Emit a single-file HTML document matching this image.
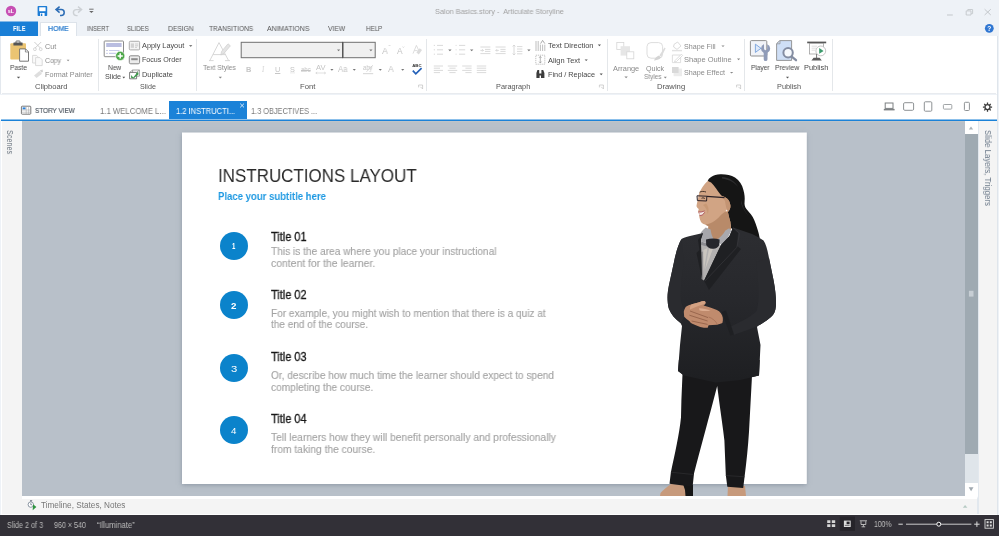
<!DOCTYPE html>
<html lang="en">
<head>
<meta charset="utf-8">
<title>Salon Basics.story - Articulate Storyline</title>
<style>
*{box-sizing:border-box;margin:0;padding:0}
html,body{width:999px;height:536px;overflow:hidden;background:#eef2f7}
body{position:relative;font-family:"Liberation Sans",sans-serif;font-size:8px;color:#444}
#app{position:absolute;left:0;top:0;width:999px;height:536px;overflow:hidden}
#app>div,#app>svg{position:absolute}
.x{white-space:pre;line-height:1;transform-origin:0 0;will-change:transform}
#titlebar{left:0;top:0;width:999px;height:36px;background:#eef2f7}
#filetab{left:0;top:22px;width:38px;height:14px;background:#1a7fd6;box-shadow:0 -.5px 0 #1a7fd6}
#hometab{left:40px;top:22px;width:37px;height:15px;background:#fff;border:1px solid #dde3ea;border-bottom:none}
#ribbon{left:0;top:36px;width:999px;height:58px;background:#fff;border-left:1px solid #e3e8ee}
#ribbonline{left:2px;top:93px;width:994px;height:1px;background:#e8ebef}
.gl{top:39px;width:1px;height:52px;background:#e4e7ea}
#doctabs{left:0;top:95px;width:999px;height:25px;background:#fff}
#acttab{left:168.5px;top:100.8px;width:78px;height:19.4px;background:#1b82d8}
#blueline{left:1px;top:119px;width:997px;height:2px;background:linear-gradient(#8cc0eb 50%,#1b82d8 50%)}
#ws{left:0;top:121px;width:999px;height:375px;background:#b8c0c9}
#leftp{left:0;top:121px;width:21.5px;height:394px;background:#f4f4f4;border-left:1px solid #eef2f7;box-shadow:inset 1px 0 0 #fff}
#rightp{left:978px;top:121px;width:21px;height:394px;background:#f4f4f4;border-left:1px solid #e2e8ee}
#vscroll{left:964.5px;top:121px;width:13.5px;height:375px;background:#9faab2}
#vs-top{left:964.5px;top:121px;width:13.5px;height:13px;background:#fff}
#vs-track{left:964.5px;top:454px;width:13.5px;height:29px;background:#dfe5ea}
#vs-bot{left:964.5px;top:483px;width:13.5px;height:12.5px;background:#fff}
#slide{left:182px;top:133px;width:624px;height:351px;background:#fff;box-shadow:0 .5px 4.5px rgba(105,118,135,.55)}
#tlbar{left:22px;top:495.5px;width:956px;height:19.5px;background:#f4f4f4;border-top:3px solid #fff;border-right:1px solid #e2e8ee}
#redge{left:997px;top:36px;width:2px;height:479px;background:#eef2f7;border-left:1px solid #dfe5eb}
#wline{left:1px;top:514px;width:996px;height:1px;background:#fdfdfd}
#status{left:0;top:515px;width:999px;height:21px;background:#323037}
.vt{font-size:8.1px;line-height:1;white-space:pre;transform-origin:0 0;transform:rotate(90deg)}
.circ{width:28px;height:28px;border-radius:50%;background:#0b83cb}
</style>
</head>
<body>
<div id="app">
<div id="titlebar"></div>
<div id="filetab"></div>
<div id="hometab"></div>
<div id="ribbon"></div>
<div id="ribbonline"></div>
<div class="gl" style="left:97.5px"></div>
<div class="gl" style="left:196px"></div>
<div class="gl" style="left:426px"></div>
<div class="gl" style="left:606.5px"></div>
<div class="gl" style="left:743.5px"></div>
<div class="gl" style="left:832px"></div>
<div id="doctabs"></div>
<div id="acttab"></div>
<div id="blueline"></div>
<div id="ws"></div>
<div id="leftp"></div>
<div id="vscroll"></div>
<div id="vs-top"></div>
<div id="vs-track"></div>
<div id="vs-bot"></div>
<div id="rightp"></div>
<div id="slide"></div>
<svg style="left:0;top:0" width="999" height="496" viewBox="0 0 999 496"><rect x="182" y="132.5" width="624.8" height="351.4" fill="#fff"/><rect x="22" y="121" width="942.5" height="1.2" fill="#c2c6c9" opacity=".7"/></svg>
<div class="circ" style="left:219.8px;top:231.5px"></div>
<div class="circ" style="left:219.8px;top:291.2px"></div>
<div class="circ" style="left:219.8px;top:354.3px"></div>
<div class="circ" style="left:219.8px;top:416.3px"></div>
<svg id="womansvg" style="left:0;top:0" width="999" height="496" viewBox="0 0 999 496">
<g id="woman">
<defs><linearGradient id="jk" gradientUnits="userSpaceOnUse" x1="0" y1="236" x2="0" y2="380"><stop offset="0" stop-color="#2c2d31"/><stop offset=".45" stop-color="#27282c"/><stop offset="1" stop-color="#1e1f22"/></linearGradient></defs>
<!-- feet / shoes (below trousers) -->
<path d="M671 484 C667 487 663 490 660.5 493 L660 496 L692 496 L692 485 Z" fill="#c79a7c"/>
<path d="M683 484 L693 485 L693 496 L685.5 496 L685 490 Z" fill="#161616"/>
<path d="M728 485 L745 486 L746 496 L727.5 496 Z" fill="#c79a7c"/>
<!-- hair -->
<path d="M707.7 181 C708.5 178 713 174.6 720.3 174.2 C725.5 174 731 175 735 177.5 C739.5 180.5 742.3 185 743.4 190 C744.6 194 745 198 744.6 201.5 C744.3 204 744.6 206.5 746.4 209 C749.5 212.5 752.6 216 754.2 220 C756 224.5 757.6 229 758.6 233 L759.8 238.5 L748 240 L737 233 L731 228 L727 211 L716 190 Z" fill="#151515"/>
<path d="M722 177 C729 177.5 735 181 738.5 187.5 C735 183 729 179.5 722 178.6 Z" fill="#2e2e30"/>
<path d="M741 200 C742 206 745 211 748.5 216 C745.4 212.6 742.4 208 741 203 Z" fill="#2c2c2e"/>
<!-- neck + face -->
<path d="M707.7 181 C705.5 183 703.8 185 702.7 186.8 C701 189.5 699.5 192 698.8 194.4 C698.4 196 698.2 197.3 698.1 198.6 C697.6 201 696.8 204 696.5 206.1 C696.7 207.5 697.8 208.5 698.8 209 C698.4 210 698.1 211 698.1 212 C698.5 213 699 213.8 699.3 214.5 C699.2 215.5 699.2 216.2 699.3 217 C699.8 219 700.3 220.8 701 222.1 C702.2 223.6 703.8 224.3 705.2 224.6 C706.3 225.2 707.5 225.8 708.5 226.3 C708.3 228 708 230 707.7 232.5 L712 240 L724 238 L731 229 L730.4 222.1 C729.5 219 728.6 215.5 727.9 212 C729.5 210.5 730.8 208 730.4 205.3 C730 202.5 728.8 200 727 198.6 C725.5 197.5 723.8 196.6 722 196.1 C720 194 717.8 191 716.1 188.5 C714.5 186.3 712.8 184.3 711.1 182.6 Z" fill="#d1a484"/>
<path d="M705.2 224.6 C710 224 716 221 720 216 C723 213 725 211 727.9 212 C728.6 215.5 729.5 219 730.4 222.1 L731 229 L724 238 L712 240 L707.7 232.5 L708.5 226.3 Z" fill="#b88a69"/>
<path d="M722 196.1 C723.8 196.6 725.5 197.5 727 198.6 C728.8 200 730 202.5 730.4 205.3 C730.8 208 729.5 210.5 727.9 212 C726.5 209 725.5 205 725 201 Z" fill="#c39473"/>
<!-- glasses -->
<path d="M697 195.8 L706.8 196.2 L706.6 201 L697.4 200.6 Z" fill="none" stroke="#2b2126" stroke-width="1"/>
<path d="M706.8 196.4 L724.5 197.6" stroke="#2b2126" stroke-width="1.3" fill="none"/>
<path d="M698.8 213 L701.8 213.6" stroke="#a8455a" stroke-width="1" fill="none"/>
<path d="M699.6 192.2 C701.5 191.2 704 191.2 706 192" stroke="#3a2a22" stroke-width=".9" fill="none"/>
<path d="M701.6 198.3 C702.6 197.7 703.8 197.8 704.8 198.5" stroke="#2a1c18" stroke-width=".9" fill="none"/>
<path d="M699 212 C700.6 212.6 702.6 212.4 704.4 211.2 C704 213.6 702.2 215.4 699.8 215.2 Z" fill="#f3e9e4"/>
<path d="M698.4 211.8 C700.4 212.3 702.6 211.9 704.6 210.8" stroke="#a8455a" stroke-width=".8" fill="none"/>
<path d="M699.6 215.4 C701.6 215.8 703.4 214.6 704.6 212.4" stroke="#a8455a" stroke-width=".8" fill="none"/>
<path d="M703 205 C705.5 207 707.5 210 707.5 214 C709.5 210.5 708.5 206 706 203.5 Z" fill="#c4946f" opacity=".7"/>
<circle cx="726.6" cy="210.6" r=".8" fill="#f2f2f2"/>
<!-- scarf + shirt -->
<path d="M701.4 243 L721.6 245.5 L704.2 280.6 L701.4 279.2 Z" fill="#b3b1b1"/>
<path d="M703.4 250 L707.5 248 L703.6 272 Z M709 249 L713 248.6 L705 270 Z" fill="#d2ccc4" opacity=".75"/>
<path d="M701.6 252 L703 251.6 L703.2 279.8 L701.4 279.2 Z" fill="#8c8a8c"/>
<path d="M700.8 232.6 C702.4 230.6 704 229 705.7 227.6 L710.6 229.4 C711 232.6 712 236 713.6 239 L717 239.4 L709 244 L701.2 241.6 Z" fill="#a6a6ab"/>
<path d="M729.2 228.2 L731.2 231 C729 236 725.6 241.4 722 245.6 L716.6 240.2 C720 237.4 723.4 234 725.4 230.4 Z" fill="#a9a9ae"/>
<path d="M701.2 241.6 L709 244 L707 246.6 L701.4 245 Z" fill="#8b8b91"/>
<path d="M706 239.6 C710 238.4 715 238.2 719.6 239.4 L719.4 245 C718 247.6 715.6 249 713 248.8 C710 249 707.6 247.6 706.2 245 Z" fill="#25262c"/>
<!-- jacket -->
<path d="M703 233 L690 236 C686 237 683 238 681.5 239 C678.5 244 676 252 674 262 L669 285 C668 290 667.3 295 667.6 300 C667.8 304 668.2 307 669 309 C671 314 675 319 680.5 323 L682 326 L680 345 L678 371 L684 375.5 L700 379 L715.7 382.6 L740 380 L759 375.5 L760.5 345 L757 327 L758 325.8 C762 323.5 767 320.5 771 317 C774 314.5 775.5 311 775.9 306 C776.3 300 775.5 290 773.5 280 L769 258 C767.5 250 766 244 763.5 240.5 C760 238 756 236 752 234 L733 227.5 L729.5 236 L721 245 L704.1 280.4 L701.6 279 L701 239 Z" fill="url(#jk)"/>
<!-- lapel shading -->
<path d="M733 227.5 L738 233 L737 246 L741 249 L709 290 L704.1 280.4 L721 245 L729.5 236 Z" fill="#1f2023"/>
<path d="M703 233 L698 240 L699.5 250 L696.5 253 L702 279 L701 239 Z" fill="#1f2023"/>
<path d="M733 227.8 L739.6 233.2 L736.8 247.4 L705 281" stroke="#3a3b40" stroke-width=".6" fill="none"/>
<!-- arm shading -->
<path d="M756 262 C758 280 760 295 757 310 C753 316 740 322 730 327 L730.6 336 C740 333 750 329.5 758 325.8 C762 323.5 767 320.5 771 317 C774 314.5 775.5 311 775.9 306 C776.3 300 775.5 290 773.5 280 L769 258 Z" fill="#2a2b2f"/>
<path d="M721.8 312 L730.6 336 L734 334.5 L726 310.5 Z" fill="#1f2023"/>
<path d="M684 262 C682 275 680 290 681 300 C682 306 684 310 687 313 L680.5 323 C675 319 671 314 669 309 C668.2 307 667.8 304 667.6 300 C667.3 295 668 290 669 285 L674 262 C676 252 678.5 244 681.5 239 Z" fill="#2a2b2f"/>
<!-- hands -->
<path d="M683.8 311.8 C684.2 309.6 685 308 685.9 306.8 C687.6 305.6 689.6 304.9 691.8 304.3 L699.3 302.2 C701 301.6 702.8 301.2 704.4 301.1 C705.4 301.6 705.8 302.5 705.4 303.4 C705 304.3 704.4 305 703.5 305.5 C705.8 306.2 708 306.9 710.2 307.6 C712.6 308.3 714.8 309.1 716.9 310.1 C718.6 310.9 719.8 311.9 720.7 313.1 C721.8 314.5 722.5 316 722.8 317.7 C723 319.6 722.9 321.4 722.4 323.1 C720.6 324 718.8 324.5 716.9 324.8 C714 325.1 711.2 325.2 708.6 325.2 L707.7 327.8 C705 327.8 702.6 327.5 700.2 326.9 C697.2 326 694.4 324.9 691.8 323.6 C690.8 322.9 690 322 689.3 321 C687.4 319.8 685.6 318.4 684.2 316.8 Z" fill="#c08b6d"/>
<path d="M691.8 304.3 L699.3 302.2 C701 301.6 702.8 301.2 704.4 301.1 C705.4 301.6 705.8 302.5 705.4 303.4 L697 306.6 L690 309.6 C689.6 307.4 690.4 305.6 691.8 304.3 Z" fill="#d4a283"/>
<path d="M699 308.2 C703 308.4 707.4 309.4 710.6 310.6 C707.4 311.4 703 311.2 699.6 310.4 Z" fill="#dcac8f"/>
<path d="M690 311 L708 317.6 M689.4 315.2 L707.6 321 M691.6 321 L707.6 324.4" stroke="#8f5d45" stroke-width=".8" fill="none"/>
<path d="M708.6 317 C712 318 716 321 717.4 324.6" stroke="#a06c52" stroke-width=".7" fill="none"/>
<!-- trousers -->
<path d="M682.5 374 L681.4 400 L681 417.3 C679.4 434 674.6 455 670.9 472.2 L669.5 483.8 L692.6 486.7 L694 473.6 C700 450 707 425 712.8 402.8 L717.2 386 L719 400 C721 415 723 428 724.4 440.4 L725.8 475 L727.3 486.7 L743.2 488.1 L744.6 476.5 C746.5 462 748 447 749 431.7 L751.8 379.7 L752 372 Z" fill="#18181a"/>
<path d="M670.9 472.2 L694 474.6" stroke="#2c2c2e" stroke-width=".8" fill="none"/>
<path d="M725.8 475.5 L744.6 476.8" stroke="#2c2c2e" stroke-width=".8" fill="none"/>
<!-- jacket hem over trousers -->
<path d="M678.85 360 L678 371 L684 375.5 L700 379 L715.7 382.6 L740 380 L759 375.5 L759.76 360 Z" fill="url(#jk)"/>
</g>

</svg>
<div id="tlbar"></div>
<div id="redge"></div>
<div id="wline"></div>
<div id="status"></div>
<div class="x" style="left:434.80px;top:8.00px;font-size:7.41px;color:#a2a2a2;transform:scaleX(0.9841)">Salon Basics.story -  Articulate Storyline</div>
<div class="x" style="left:12.60px;top:26.00px;font-size:7.12px;color:#fff;transform:scaleX(0.8110);font-weight:700">FILE</div>
<div class="x" style="left:47.75px;top:26.00px;font-size:7.12px;color:#2277cc;transform:scaleX(0.9728);-webkit-text-stroke:.2px #2277cc">HOME</div>
<div class="x" style="left:86.60px;top:26.00px;font-size:7.12px;color:#565656;transform:scaleX(0.8572)">INSERT</div>
<div class="x" style="left:126.70px;top:26.00px;font-size:7.12px;color:#565656;transform:scaleX(0.8612)">SLIDES</div>
<div class="x" style="left:167.60px;top:26.00px;font-size:7.12px;color:#565656;transform:scaleX(0.9402)">DESIGN</div>
<div class="x" style="left:208.70px;top:26.00px;font-size:7.12px;color:#565656;transform:scaleX(0.9240)">TRANSITIONS</div>
<div class="x" style="left:267.30px;top:26.00px;font-size:7.12px;color:#565656;transform:scaleX(0.9689)">ANIMATIONS</div>
<div class="x" style="left:327.90px;top:26.00px;font-size:7.12px;color:#565656;transform:scaleX(0.9480)">VIEW</div>
<div class="x" style="left:365.70px;top:26.00px;font-size:7.12px;color:#565656;transform:scaleX(0.8763)">HELP</div>
<div class="x" style="left:9.50px;top:65.00px;font-size:7.12px;color:#484848;transform:scaleX(0.9382)">Paste</div>
<div class="x" style="left:45.10px;top:44.00px;font-size:7.12px;color:#8a8a8a;transform:scaleX(1.0101)">Cut</div>
<div class="x" style="left:45.10px;top:58.00px;font-size:7.12px;color:#8a8a8a;transform:scaleX(0.9623)">Copy</div>
<div class="x" style="left:45.10px;top:72.00px;font-size:7.12px;color:#8a8a8a;transform:scaleX(1.0137)">Format Painter</div>
<div class="x" style="left:34.90px;top:84.00px;font-size:7.12px;color:#555;transform:scaleX(1.0697)">Clipboard</div>
<div class="x" style="left:107.90px;top:65.00px;font-size:7.12px;color:#484848;transform:scaleX(0.9279)">New</div>
<div class="x" style="left:105.10px;top:74.00px;font-size:7.12px;color:#484848;transform:scaleX(1.0218)">Slide</div>
<div class="x" style="left:142.20px;top:43.00px;font-size:7.12px;color:#484848;transform:scaleX(1.0285)">Apply Layout</div>
<div class="x" style="left:142.20px;top:57.00px;font-size:7.12px;color:#484848;transform:scaleX(0.9990)">Focus Order</div>
<div class="x" style="left:142.20px;top:72.00px;font-size:7.12px;color:#484848;transform:scaleX(1.0409)">Duplicate</div>
<div class="x" style="left:140.10px;top:84.00px;font-size:7.12px;color:#555;transform:scaleX(1.0029)">Slide</div>
<div class="x" style="left:203.10px;top:65.00px;font-size:7.12px;color:#8a8a8a;transform:scaleX(0.9564)">Text Styles</div>
<div class="x" style="left:245.90px;top:66.00px;font-size:7.27px;color:#c6c6c6;transform:scaleX(1.0200);font-weight:700">B</div>
<div class="x" style="left:262.35px;top:66.00px;font-size:7.63px;color:#c6c6c6;transform:scaleX(0.7500);font-family:'Liberation Serif',serif;font-style:italic">I</div>
<div class="x" style="left:274.70px;top:66.00px;font-size:7.27px;color:#c6c6c6;transform:scaleX(1.0200);text-decoration:underline">U</div>
<div class="x" style="left:289.60px;top:66.00px;font-size:7.27px;color:#c4c4c4;transform:scaleX(1.0000)">S</div>
<div class="x" style="left:301.30px;top:67.00px;font-size:6.69px;color:#c6c6c6;transform:scaleX(0.8917);text-decoration:line-through">abc</div>
<div class="x" style="left:315.70px;top:65.00px;font-size:6.69px;color:#c4c4c4;transform:scaleX(1.1267)">AV</div>
<div class="x" style="left:337.70px;top:66.00px;font-size:8.14px;color:#c4c4c4;transform:scaleX(0.9406)">Aa</div>
<div class="x" style="left:363.00px;top:65.00px;font-size:6.4px;color:#c4c4c4;transform:scaleX(0.9182)">aby</div>
<div class="x" style="left:387.80px;top:64.00px;font-size:9.45px;color:#c4c4c4;transform:scaleX(0.9143)">A</div>
<div class="x" style="left:381.90px;top:46.00px;font-size:9.59px;color:#c4c4c4;transform:scaleX(0.9143)">A</div>
<div class="x" style="left:396.60px;top:47.00px;font-size:8.43px;color:#c4c4c4;transform:scaleX(0.9333)">A</div>
<div class="x" style="left:299.90px;top:84.00px;font-size:7.12px;color:#555;transform:scaleX(1.0807)">Font</div>
<div class="x" style="left:547.70px;top:43.00px;font-size:7.12px;color:#484848;transform:scaleX(1.0577)">Text Direction</div>
<div class="x" style="left:547.70px;top:58.00px;font-size:7.12px;color:#484848;transform:scaleX(1.0471)">Align Text</div>
<div class="x" style="left:547.70px;top:72.00px;font-size:7.12px;color:#484848;transform:scaleX(1.0265)">Find / Replace</div>
<div class="x" style="left:495.70px;top:84.00px;font-size:7.12px;color:#555;transform:scaleX(1.0317)">Paragraph</div>
<div class="x" style="left:612.80px;top:66.00px;font-size:7.12px;color:#8a8a8a;transform:scaleX(1.0340)">Arrange</div>
<div class="x" style="left:646.20px;top:66.00px;font-size:7.12px;color:#8a8a8a;transform:scaleX(0.9883)">Quick</div>
<div class="x" style="left:644.30px;top:74.00px;font-size:7.12px;color:#8a8a8a;transform:scaleX(0.9089)">Styles</div>
<div class="x" style="left:683.80px;top:44.00px;font-size:7.12px;color:#8a8a8a;transform:scaleX(1.0020)">Shape Fill</div>
<div class="x" style="left:683.80px;top:57.00px;font-size:7.12px;color:#8a8a8a;transform:scaleX(1.0553)">Shape Outline</div>
<div class="x" style="left:683.80px;top:70.00px;font-size:7.12px;color:#8a8a8a;transform:scaleX(1.0122)">Shape Effect</div>
<div class="x" style="left:657.10px;top:84.00px;font-size:7.12px;color:#555;transform:scaleX(1.0795)">Drawing</div>
<div class="x" style="left:750.90px;top:65.00px;font-size:7.12px;color:#484848;transform:scaleX(0.9190)">Player</div>
<div class="x" style="left:774.90px;top:65.00px;font-size:7.12px;color:#484848;transform:scaleX(0.9560)">Preview</div>
<div class="x" style="left:804.10px;top:65.00px;font-size:7.12px;color:#484848;transform:scaleX(1.0401)">Publish</div>
<div class="x" style="left:776.90px;top:84.00px;font-size:7.12px;color:#555;transform:scaleX(1.0315)">Publish</div>
<div class="x" style="left:35.30px;top:107.00px;font-size:7.7px;color:#505963;transform:scaleX(0.8332);-webkit-text-stroke:.2px #505963">STORY VIEW</div>
<div class="x" style="left:99.90px;top:108.00px;font-size:8.28px;color:#7a7a7a;transform:scaleX(0.9374)">1.1 WELCOME L...</div>
<div class="x" style="left:175.70px;top:108.00px;font-size:8.14px;color:#fff;transform:scaleX(0.9275)">1.2 INSTRUCTI...</div>
<div class="x" style="left:251.00px;top:108.00px;font-size:8.28px;color:#7a7a7a;transform:scaleX(0.8891)">1.3 OBJECTIVES ...</div>
<div class="x" style="left:41.30px;top:502.00px;font-size:8.14px;color:#777;transform:scaleX(1.0092)">Timeline, States, Notes</div>
<div class="x" style="left:6.70px;top:522.00px;font-size:8.14px;color:#bbbbbb;transform:scaleX(0.8873)">Slide 2 of 3</div>
<div class="x" style="left:54.10px;top:522.00px;font-size:8.14px;color:#bbbbbb;transform:scaleX(0.8792)">960 × 540</div>
<div class="x" style="left:97.40px;top:522.00px;font-size:8.14px;color:#bbbbbb;transform:scaleX(0.9363)">“Illuminate”</div>
<div class="x" style="left:873.80px;top:521.00px;font-size:8.14px;color:#bcbcbc;transform:scaleX(0.8416)">100%</div>
<div class="x" style="left:218.37px;top:167.00px;font-size:18.31px;color:#2a2a2a;transform:scaleX(0.9278)">INSTRUCTIONS LAYOUT</div>
<div class="x" style="left:218.30px;top:191.00px;font-size:11.19px;color:#1e99e2;transform:scaleX(0.8548);font-weight:700">Place your subtitle here</div>
<div class="x" style="left:270.90px;top:232.00px;font-size:11.92px;color:#181818;transform:scaleX(0.9210);-webkit-text-stroke:.32px #181818">Title 01</div>
<div class="x" style="left:270.90px;top:246.00px;font-size:10.9px;color:#a3a3a3;transform:scaleX(0.9313);-webkit-text-stroke:.12px #a3a3a3">This is the area where you place your instructional</div>
<div class="x" style="left:270.90px;top:258.00px;font-size:10.9px;color:#a3a3a3;transform:scaleX(0.9564);-webkit-text-stroke:.12px #a3a3a3">content for the learner.</div>
<div class="x" style="left:270.90px;top:290.00px;font-size:11.92px;color:#181818;transform:scaleX(0.9210);-webkit-text-stroke:.32px #181818">Title 02</div>
<div class="x" style="left:270.90px;top:308.00px;font-size:10.9px;color:#a3a3a3;transform:scaleX(0.9262);-webkit-text-stroke:.12px #a3a3a3">For example, you might wish to mention that there is a quiz at</div>
<div class="x" style="left:270.90px;top:319.00px;font-size:10.9px;color:#a3a3a3;transform:scaleX(0.9210);-webkit-text-stroke:.12px #a3a3a3">the end of the course.</div>
<div class="x" style="left:270.90px;top:352.00px;font-size:11.92px;color:#181818;transform:scaleX(0.9210);-webkit-text-stroke:.32px #181818">Title 03</div>
<div class="x" style="left:270.90px;top:370.00px;font-size:10.9px;color:#a3a3a3;transform:scaleX(0.9274);-webkit-text-stroke:.12px #a3a3a3">Or, describe how much time the learner should expect to spend</div>
<div class="x" style="left:270.90px;top:382.00px;font-size:10.9px;color:#a3a3a3;transform:scaleX(0.9329);-webkit-text-stroke:.12px #a3a3a3">completing the course.</div>
<div class="x" style="left:270.90px;top:414.00px;font-size:11.92px;color:#181818;transform:scaleX(0.9210);-webkit-text-stroke:.32px #181818">Title 04</div>
<div class="x" style="left:270.90px;top:432.00px;font-size:10.9px;color:#a3a3a3;transform:scaleX(0.9412);-webkit-text-stroke:.12px #a3a3a3">Tell learners how they will benefit personally and professionally</div>
<div class="x" style="left:270.90px;top:444.00px;font-size:10.9px;color:#a3a3a3;transform:scaleX(0.9409);-webkit-text-stroke:.12px #a3a3a3">from taking the course.</div>
<div class="x" style="left:231.70px;top:241.00px;font-size:9.74px;color:#fff;transform:scaleX(0.6167);font-weight:700">1</div>
<div class="x" style="left:230.70px;top:301.00px;font-size:9.74px;color:#fff;transform:scaleX(0.9167);font-weight:700">2</div>
<div class="x" style="left:230.70px;top:364.00px;font-size:9.74px;color:#fff;transform:scaleX(1.1600)">3</div>
<div class="x" style="left:230.60px;top:426.00px;font-size:9.74px;color:#fff;transform:scaleX(1.0000)">4</div>
<div class="x" style="left:13.70px;top:130.20px;font-size:9.01px;color:#6c7680;transform:rotate(90deg) scaleX(0.8061)">Scenes</div>
<div class="x" style="left:992.40px;top:130.40px;font-size:9.01px;color:#6c7a8a;transform:rotate(90deg) scaleX(0.8734)">Slide Layers, Triggers</div>
<svg id="iconsvg" style="left:0;top:0" width="999" height="536" viewBox="0 0 999 536">
<g id="qat" fill="none">
<circle cx="11" cy="11" r="5.2" fill="#c750b4"/>
<text x="11" y="12.9" font-size="5.4" font-weight="700" fill="#fff" text-anchor="middle" font-family="Liberation Sans, sans-serif">sL</text>
<rect x="37.6" y="6" width="9.6" height="10" rx=".8" fill="#1c7cd5"/>
<rect x="39.2" y="7.3" width="6.4" height="3.9" fill="#fff"/>
<rect x="40" y="13" width="4.6" height="3" fill="#fff"/>
<rect x="40.8" y="13.6" width="1.5" height="2.4" fill="#1c7cd5"/>
<path d="M59.6 6.6 L56 9.6 L59.6 12.6 M56.4 9.6 H61.2 A3 3 0 0 1 61.2 15.6 H60" stroke="#2b6cb5" stroke-width="1.5"/>
<path d="M78 6.6 L81.6 9.6 L78 12.6 M81.2 9.6 H76.4 A3 3 0 0 0 76.4 15.6 H77.6" stroke="#cdd1d5" stroke-width="1.4"/>
<path d="M89.2 9.2 H93.6" stroke="#666" stroke-width=".9"/>
<path d="M89.2 10.9 H93.6 L91.4 13.1 Z" fill="#666"/>
<path d="M947 15 H952.8" stroke="#c3c7cb" stroke-width="1"/>
<path d="M967.8 10.8 V9.5 H972.6 V13.6 H971.2 M966.2 10.9 H971 V15 H966.2 Z" stroke="#c3c7cb" stroke-width=".9"/>
<path d="M984.6 9.2 L990.8 15 M990.8 9.2 L984.6 15" stroke="#c3c7cb" stroke-width="1"/>
<circle cx="989.3" cy="28.3" r="4.4" fill="#2f76d2"/>
<text x="989.3" y="30.6" font-size="6.6" font-weight="700" fill="#fff" text-anchor="middle" font-family="Liberation Sans, sans-serif">?</text>
</g>
<g id="rib-clip" fill="none">
<rect x="10.3" y="43.3" width="15.7" height="16.2" rx=".9" fill="#ebc472"/>
<rect x="16" y="41" width="4" height="2.6" rx=".6" stroke="#555" stroke-width=".9"/>
<rect x="13.4" y="42.6" width="9.2" height="3" rx=".5" fill="#555"/>
<path d="M19.6 48.9 H25.6 L28.5 51.8 V61.2 H19.6 Z" fill="#fff" stroke="#6a6a6a" stroke-width=".9"/>
<path d="M25.4 49 V52 H28.4" stroke="#6a6a6a" stroke-width=".7"/>
<path d="M16.8 76.8 H20.2 L18.5 78.6 Z" fill="#555"/>
<path d="M34.4 42 L40.4 48 M41.2 42 L35.2 48" stroke="#cbcbcb" stroke-width=".9"/>
<circle cx="34.9" cy="49.2" r="1.4" stroke="#cbcbcb" stroke-width=".8"/>
<circle cx="40.7" cy="49.2" r="1.4" stroke="#cbcbcb" stroke-width=".8"/>
<path d="M32.6 55.4 H36.6 L38.6 57.4 V63 H32.6 Z" fill="#fafafa" stroke="#d2d2d2" stroke-width=".8"/>
<path d="M35.6 57.6 H40 L42.2 59.8 V65.6 H35.6 Z" fill="#fafafa" stroke="#d2d2d2" stroke-width=".8"/>
<path d="M66.7 59.8 H69.5 L68.1 61.3 Z" fill="#888"/>
<path d="M34 75.5 L39.5 71 L42 73.8 L36.5 78 Z" fill="#dedede"/>
<path d="M39.8 70.6 L42.6 69.6 L43 72 L41.4 72.6 Z" fill="#d2d2d2"/>
</g>
<g id="rib-slide" fill="none">
<rect x="104.2" y="41" width="19.3" height="15.7" rx=".6" fill="#fff" stroke="#8a8a8a" stroke-width="1"/>
<rect x="106.2" y="43" width="15.4" height="4" fill="#b9bde0"/>
<path d="M106.4 50.5 h1.2 M106.4 53.4 h1.2" stroke="#aeb3dc" stroke-width="1"/>
<path d="M109 50.5 H119.5 M109 53.4 H116" stroke="#c9cdea" stroke-width="1.2"/>
<circle cx="120.2" cy="55.9" r="4.6" fill="#4ea84a" stroke="#fff" stroke-width=".6"/>
<path d="M117.6 55.9 H122.8 M120.2 53.3 V58.5" stroke="#fff" stroke-width="1.5"/>
<path d="M122.4 76.8 H125.2 L123.8 78.4 Z" fill="#555"/>
<rect x="129.3" y="41.3" width="10.3" height="8.6" rx="1" fill="#f4f4f4" stroke="#9a9a9a" stroke-width=".8"/>
<rect x="130.8" y="43.4" width="3.2" height="4.4" fill="#d2d2d2"/>
<path d="M135 44 H138.2 M135 45.8 H138.2 M135 47.4 H137" stroke="#bdbdbd" stroke-width=".7"/>
<path d="M189 45.2 H192.4 L190.7 46.8 Z" fill="#555"/>
<rect x="129.3" y="55.8" width="10.3" height="8" rx="1.4" fill="#ececec" stroke="#7e7e7e" stroke-width=".9"/>
<rect x="131.2" y="58.2" width="6.5" height="2" fill="#8c8c8c"/>
<path d="M132.6 70 H139.4 V76.2 H132.6 Z" fill="#fff" stroke="#8a8a8a" stroke-width=".8"/>
<path d="M129.6 72.4 L132.6 70 M139.4 70 L136.6 72.4" stroke="#8a8a8a" stroke-width=".7"/>
<path d="M129.6 72.4 H136.6 V78.8 H129.6 Z" fill="#fff" stroke="#6e6e6e" stroke-width=".9"/>
<path d="M131.2 75 L133.2 77.4 L138 71.6 L138.6 74.2 L133.6 78.4 L131 77.8 Z" fill="#3f9a4e"/>
</g>
<g id="rib-font" fill="none">
<path d="M209.8 60.6 L219 42.6 L228.6 60.6 M213 54.6 H225.6 M209 60.6 H213.6 M225 60.6 H230" stroke="#d2d2d2" stroke-width=".9"/>
<path d="M220.8 55 L221.6 51.4 L228 43.8 L230.4 45.8 L224 53.4 Z" fill="#e4e4e4" stroke="#cfcfcf" stroke-width=".7"/>
<path d="M218.7 76.8 H222 L220.3 78.5 Z" fill="#888"/>
<rect x="241.2" y="42.3" width="101.4" height="15.4" fill="#f0f0f0" stroke="#707070" stroke-width="1"/>
<rect x="342.8" y="42.3" width="32.4" height="15.4" fill="#f0f0f0" stroke="#707070" stroke-width="1"/>
<path d="M342.7 42 V58" stroke="#555" stroke-width="1.3"/>
<path d="M337 49.4 H340.2 L338.6 51.2 Z M369.3 49.4 H372.5 L370.9 51.2 Z" fill="#777"/>
<path d="M388.6 46 l.9 -1 l.9 1 M402.6 46.6 l.8 .9 l.8 -.9" stroke="#c9c9c9" stroke-width=".6"/>
<path d="M413 53.6 L416.4 45.4 L419 51 M414.4 50.6 H417.6" stroke="#d4d4d4" stroke-width=".8"/>
<path d="M416.4 52.6 L419.6 48.2 L422 50 L418.8 54.4 Z" fill="#dcdcdc"/>
<path d="M315.8 73 H325.6 M315.8 73 l1.4 -1 M315.8 73 l1.4 1 M325.6 73 l-1.4 -1 M325.6 73 l-1.4 1" stroke="#cfcfcf" stroke-width=".6"/>
<path d="M363 73.6 H373.2" stroke="#dcdcdc" stroke-width="1.2"/>
<path d="M366.5 71.8 L372.8 65.2" stroke="#cfcfcf" stroke-width=".8"/>
<path d="M330.3 69 H333.5 L331.9 70.7 Z M352.7 69 H355.9 L354.3 70.7 Z M378.7 69 H381.9 L380.3 70.7 Z M401.1 69 H404.3 L402.7 70.7 Z" fill="#777"/>
<path d="M290 72.9 H295" stroke="#dadada" stroke-width=".6"/>
<text x="416.9" y="67.4" font-size="3.9" font-weight="700" fill="#333" text-anchor="middle" font-family="Liberation Sans, sans-serif" textLength="9.4" lengthAdjust="spacingAndGlyphs">ABC</text>
<path d="M412.8 70.6 L415.8 73.8 L421.6 68.2" stroke="#2461b8" stroke-width="1.7"/>
<path d="M418.6 85 H422.6 V89 M420.4 86.8 L422.4 88.8 M418.6 85 V87.4" stroke="#b5b5b5" stroke-width=".6"/>
</g>
<g id="rib-para" fill="none" stroke="#d0d0d0" stroke-width=".8">
<path d="M433.8 45.4 h1.2 M433.8 49.8 h1.2 M433.8 54.2 h1.2 M437 45.4 H443 M437 49.8 H443 M437 54.2 H443"/>
<path d="M455.6 45.4 h1 M455.6 49.8 h1 M455.6 54.2 h1 M459 45.4 H465.2 M459 49.8 H465.2 M459 54.2 H465.2"/>
<path d="M480.4 47 H490.4 M485 49.4 H490.4 M485 51.4 H490.4 M480.4 53.6 H490.4 M480.4 50.4 h3 l-1.2 -1.2 m1.2 1.2 l-1.2 1.2"/>
<path d="M495.6 47 H505.6 M500.4 49.4 H505.6 M500.4 51.4 H505.6 M495.6 53.6 H505.6 M498.8 50.4 h-3 l1.2 -1.2 m-1.2 1.2 l1.2 1.2"/>
<path d="M514 45 V55 M514 45 l-1.3 1.5 M514 45 l1.3 1.5 M514 55 l-1.3 -1.5 M514 55 l1.3 -1.5 M517 46.6 H522.4 M517 49 H522.4 M517 51.4 H522.4 M517 53.8 H522.4"/>
<path d="M433.8 66 H443 M433.8 68.2 H440 M433.8 70.4 H443 M433.8 72.6 H440"/>
<path d="M447.8 66 H457.2 M449.4 68.2 H455.6 M447.8 70.4 H457.2 M449.4 72.6 H455.6"/>
<path d="M462.2 66 H471.6 M465.4 68.2 H471.6 M462.2 70.4 H471.6 M465.4 72.6 H471.6"/>
<path d="M476.8 66 H486.2 M476.8 68.2 H486.2 M476.8 70.4 H486.2 M476.8 72.6 H486.2"/>
<path d="M448.2 49.4 H451.6 L449.9 51.2 Z M470 49.4 H473.4 L471.7 51.2 Z M527.2 49.4 H530.6 L528.9 51.2 Z" fill="#777" stroke="none"/>
<path d="M536 41 V51 M538.2 41 V51 M540.4 44.6 V51 M542.6 44.6 V51 M544.8 44.6 V51" stroke="#a5a5a5" stroke-width=".7"/>
<path d="M540.6 43.6 L542.6 40.4 L544.8 43.6" stroke="#8a8a8a" stroke-width=".7"/>
<rect x="535.8" y="55.2" width="9" height="9" stroke="#a8a8a8" stroke-width=".7" stroke-dasharray="1.2 .8"/>
<path d="M540.3 56.4 V63 M540.3 56.4 l-1.2 1.4 M540.3 56.4 l1.2 1.4 M540.3 63 l-1.2 -1.4 M540.3 63 l1.2 -1.4" stroke="#999" stroke-width=".7"/>
<path d="M536.4 78 V73 L537.4 70 H539.2 V73.4 H541.4 V70 H543.2 L544.4 73 V78 H541 V75.6 H539.6 V78 Z" fill="#3c3c3c" stroke="none"/>
<path d="M597.8 44.6 H601 L599.4 46.2 Z M584.6 59.4 H587.8 L586.2 61 Z M599.6 73.6 H602.8 L601.2 75.2 Z" fill="#555" stroke="none"/>
<path d="M599.4 85 H603.4 V89 M601.2 86.8 L603.2 88.8 M599.4 85 V87.4" stroke="#b5b5b5" stroke-width=".6"/>
</g>
<g id="rib-draw" fill="none">
<rect x="616.8" y="42.4" width="7" height="7" fill="#fff" stroke="#d6d6d6" stroke-width=".8"/>
<rect x="620.6" y="46.2" width="9.4" height="9.4" fill="#e6e6e6"/>
<rect x="626.8" y="51.8" width="7" height="7" fill="#fff" stroke="#d6d6d6" stroke-width=".8"/>
<path d="M624.4 76.4 H627.8 L626.1 78.2 Z" fill="#888"/>
<rect x="647" y="42.6" width="15.6" height="15.6" rx="4" stroke="#d9d9d9" stroke-width=".9"/>
<path d="M654 60.4 C655 58 657 56.4 659 55.6 L661 57.6 C659.5 59.4 657 60.6 654 60.4 Z" fill="#d4d4d4"/>
<path d="M659.4 55.2 L664.6 47.6 L665.6 48.4 L661.2 57 Z" fill="#dcdcdc"/>
<path d="M663.8 76.8 H666.8 L665.3 78.4 Z" fill="#888"/>
<path d="M674 44.4 L677.6 42 L681 46 L677 49.4 L673.6 47 Z" stroke="#d2d2d2" stroke-width=".8"/>
<path d="M672 50.6 H682" stroke="#e2e2e2" stroke-width="1.4"/>
<path d="M672.4 55 H680.6 V62.6 H672.4 Z" stroke="#d6d6d6" stroke-width=".8"/>
<path d="M675 60.6 L681.4 54.2 L682.6 55.4 L676.4 61.6 L674.6 62 Z" fill="#fff" stroke="#cfcfcf" stroke-width=".7"/>
<rect x="673.6" y="68.6" width="8.4" height="7.6" fill="#ececec"/>
<rect x="672" y="67" width="6.6" height="6" fill="#d9d9d9"/>
<path d="M721.4 45.4 H724.6 L723 47 Z M737 58.6 H740.2 L738.6 60.2 Z M730 72 H733.2 L731.6 73.6 Z" fill="#888"/>
<path d="M736.6 85 H740.6 V89 M738.4 86.8 L740.4 88.8 M736.6 85 V87.4" stroke="#b5b5b5" stroke-width=".6"/>
</g>
<g id="rib-pub" fill="none">
<rect x="750.4" y="40.6" width="16.4" height="15.4" rx="1" fill="#f1f3f8" stroke="#858585" stroke-width=".9"/>
<path d="M755.4 44.2 V52.4 L761 48.3 Z" fill="#dfe9f9" stroke="#6a98d8" stroke-width=".8"/>
<path d="M764 44.2 V48.6 A1.6 1.6 0 0 0 767.2 48.6 V44.2 A4.7 4.7 0 0 1 767.5 52.8 V59.2 A1.9 1.9 0 0 1 763.7 59.2 V52.8 A4.7 4.7 0 0 1 764 44.2 Z" fill="#8f9bb8"/>
<path d="M776.6 43.6 L779.8 40.6 H791.6 V60.4 H776.6 Z" fill="#cfdff6" stroke="#8d8d8d" stroke-width=".9"/>
<path d="M776.8 43.8 H780 V40.8" stroke="#8d8d8d" stroke-width=".7"/>
<circle cx="788.1" cy="52.8" r="4.7" fill="#f6f9fd" stroke="#848da2" stroke-width="2"/>
<path d="M792 56.8 L796 60.2" stroke="#848da2" stroke-width="2.3" stroke-linecap="round"/>
<path d="M786 76.8 H789 L787.5 78.4 Z" fill="#555"/>
<rect x="807.2" y="41.6" width="19" height="1.7" fill="#585858"/>
<rect x="809.4" y="43.4" width="14.2" height="10.6" fill="#fff" stroke="#a0a0a0" stroke-width=".8"/>
<path d="M811.6 46.2 H817 M811.6 48.2 H816 M811.6 50.2 H815" stroke="#d2d2d2" stroke-width=".7"/>
<path d="M816.6 54 V58" stroke="#777" stroke-width="1"/>
<path d="M811.4 60.4 L813.6 57.8 H819.6 L821.8 60.4 Z" fill="#5a5a5a"/>
<circle cx="820.8" cy="50.9" r="4.9" fill="#fff" stroke="#b8b8b8" stroke-width=".8"/>
<path d="M819.2 48 V53.8 L823.6 50.9 Z" fill="#3c9a6c"/>
</g>
<g id="doctab-ic" fill="none">
<rect x="21.4" y="106.2" width="9.4" height="8" rx=".8" fill="#fff" stroke="#6a6a6a" stroke-width=".9"/>
<rect x="22.6" y="107.4" width="3" height="2" fill="#2b7fd8"/>
<path d="M26.2 106.6 V114 M28.6 106.6 V114 M21.8 110 H30.4 M21.8 112.2 H30.4" stroke="#a9a9a9" stroke-width=".6"/>
<path d="M240.2 103.6 L244 107.4 M244 103.6 L240.2 107.4" stroke="#fff" stroke-width=".8"/>
<rect x="885.2" y="103" width="7.8" height="5.4" stroke="#7d8082" stroke-width="1"/>
<rect x="883.8" y="108.9" width="10.8" height="1.5" fill="#7d8082"/>
<rect x="903.6" y="102.7" width="10" height="7.6" rx="1.2" stroke="#8e9294" stroke-width="1"/>
<rect x="924.3" y="101.8" width="7.5" height="9.4" rx="1" stroke="#8e9294" stroke-width="1"/>
<rect x="943.4" y="104.5" width="8.4" height="4.6" rx=".8" stroke="#a0a4a6" stroke-width="1"/>
<rect x="964.4" y="102.3" width="5" height="8.2" rx=".9" stroke="#8e9294" stroke-width="1"/>
<g transform="translate(987.5 107.1)">
<circle r="2.5" stroke="#3a3a3a" stroke-width="1.4"/>
<path d="M0 -4.6 V-3 M0 4.6 V3 M-4.6 0 H-3 M4.6 0 H3 M-3.25 -3.25 L-2.1 -2.1 M3.25 3.25 L2.1 2.1 M-3.25 3.25 L-2.1 2.1 M3.25 -3.25 L2.1 -2.1" stroke="#3a3a3a" stroke-width="1.3"/>
</g>
</g>
<g id="bottom-ic" fill="none">
<circle cx="30.8" cy="504.6" r="2.7" fill="#fff" stroke="#7f8b9a" stroke-width=".9"/>
<path d="M30 500.6 H32.2 M31 500.8 V502 M30.8 503.2 V504.7 H31.9" stroke="#5f6b7a" stroke-width=".8"/>
<path d="M33 504.2 L36.4 507 L32.7 510.2 Z" fill="#2f9440"/>
<path d="M962.8 507.8 L965.1 504.9 L967.4 507.8 Z" fill="#b7cbc4"/>
<path d="M968.8 129.6 L971 126.6 L973.2 129.6 Z" fill="#aab3b9"/>
<path d="M968.7 487.2 H973.5 L971.1 491.2 Z" fill="#a0a9b0"/>
<rect x="968.9" y="290.8" width="4.6" height="5.8" fill="#c7ced4"/>
<path d="M827.2 520.3 h3.2 v2.6 h-3.2 Z M831.8 520.3 h3.4 v2.6 h-3.4 Z M827.2 524.3 h3.2 v2.6 h-3.2 Z M831.8 524.3 h3.4 v2.6 h-3.4 Z" fill="#d6d6d6"/>
<rect x="839.8" y="516.6" width="15.2" height="14.2" fill="#26242a"/>
<rect x="843.9" y="520.6" width="6.8" height="6.4" fill="#dcdcdc"/>
<rect x="846.6" y="521.6" width="3" height="2.6" fill="#26242a"/>
<path d="M844.8 525.4 H849.6" stroke="#26242a" stroke-width=".6"/>
<path d="M859.8 520.8 H867 M861 521.2 V524.5 H865.8 V521.2 M863.4 524.5 V526.6 M861.6 526.8 H865.2" stroke="#cfcfcf" stroke-width=".85"/>
<path d="M898.4 524.2 H902.8" stroke="#dcdcdc" stroke-width="1"/>
<path d="M906 524.2 H971.4" stroke="#dcdcdc" stroke-width=".9"/>
<circle cx="938.8" cy="524.2" r="2" fill="#26242a" stroke="#fff" stroke-width="1"/>
<path d="M974.2 524.2 H979.6 M976.9 521.5 V526.9" stroke="#dcdcdc" stroke-width="1"/>
<rect x="985" y="519.6" width="8.4" height="8.6" stroke="#dcdcdc" stroke-width=".9"/>
<path d="M986.6 521.2 h2 v2 h-2 Z M989.8 521.2 h2 v2 h-2 Z M986.6 524.6 h2 v2 h-2 Z M989.8 524.6 h2 v2 h-2 Z" fill="#dcdcdc"/>
</g>

</svg>
</div>
</body>
</html>
